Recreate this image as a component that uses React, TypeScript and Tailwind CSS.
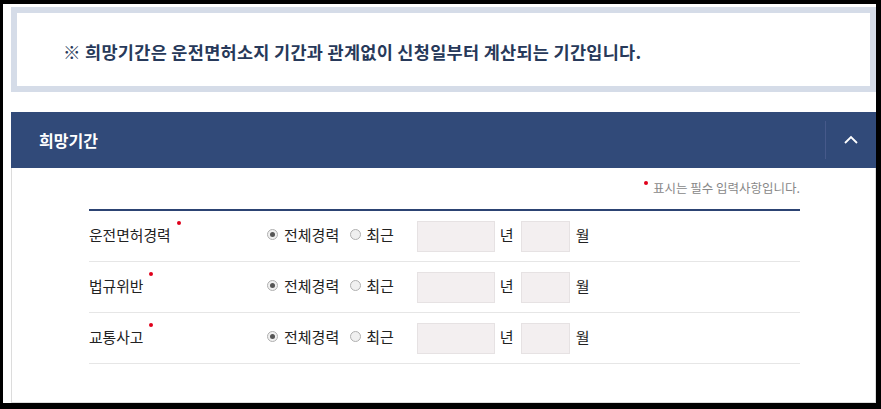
import React from "react";

const FONT = { fontFamily: '"Noto Sans CJK KR", "Noto Sans", sans-serif' };

function Radio({ checked }: { checked: boolean }) {
  return (
    <span className="w-[11px] h-[11px] rounded-full border border-[#b0b0b0] bg-[#f0f0f0] flex items-center justify-center shrink-0">
      {checked && <span className="w-[5px] h-[5px] rounded-full bg-[#555]" />}
    </span>
  );
}

function Row({ label }: { label: string }) {
  return (
    <div className="h-[51px] border-b border-[#e6e6e6] flex items-center text-[#222]">
      <div className="w-[178px] flex items-center -mt-[2px]">
        <span className="text-[14.8px] leading-none">{label}</span>
        <span className="w-[4px] h-[4px] rounded-full bg-[#e0001b] ml-[6px] -mt-[24px]" />
      </div>
      <div className="flex items-center gap-[6px] -mt-[3px]">
        <Radio checked />
        <span className="text-[15px] leading-none">전체경력</span>
      </div>
      <div className="flex items-center gap-[5px] ml-[11px] -mt-[3px]">
        <Radio checked={false} />
        <span className="text-[15px] leading-none">최근</span>
      </div>
      <div className="w-[78px] h-[31px] bg-[#f3eff0] border border-[#e6e2e3] ml-[23px]" />
      <span className="text-[15px] leading-none ml-[5px] -mt-[3px]">년</span>
      <div className="w-[49px] h-[31px] bg-[#f3eff0] border border-[#e6e2e3] ml-[7px]" />
      <span className="text-[15px] leading-none ml-[6px] -mt-[3px]">월</span>
    </div>
  );
}

export default function App() {
  return (
    <div
      className="w-[881px] h-[409px] bg-black pt-[4px] pl-[3px] pr-[5px] pb-[6px]"
      style={FONT}
    >
      <div className="bg-white h-full flex flex-col pl-[8px] pt-[3px]">
        <div className="h-[85px] border-[6px] border-[#d5dce8] flex items-center pl-[46px] pt-[5px]">
          <span className="text-[17.5px] font-bold text-[#27395a] tracking-[0.3px] whitespace-nowrap">
            ※ 희망기간은 운전면허소지 기간과 관계없이 신청일부터 계산되는 기간입니다.
          </span>
        </div>
        <div className="mt-[20px] h-[56px] bg-[#314a79] flex items-center justify-between">
          <span className="pl-[28px] text-[16px] font-bold text-white">희망기간</span>
          <div className="h-[38px] w-[51px] border-l border-[#46598a] flex items-center justify-center">
            <svg width="16" height="10" viewBox="0 0 16 10">
              <polyline
                points="2,8 8,2 14,8"
                fill="none"
                stroke="white"
                strokeWidth="1.8"
              />
            </svg>
          </div>
        </div>
        <div className="flex-1 border-l border-r border-b border-[#dcdcdc] pl-[77px] pr-[75px] pt-[11px]">
          <div className="h-[18px] flex items-center justify-end">
            <span className="w-[4px] h-[4px] rounded-full bg-[#e0001b] mr-[5px] -mt-[10px]" />
            <span className="text-[12.5px] text-[#888] leading-none">표시는 필수 입력사항입니다.</span>
          </div>
          <div className="mt-[12px] border-t-2 border-[#2c4373]">
            <Row label="운전면허경력" />
            <Row label="법규위반" />
            <Row label="교통사고" />
          </div>
        </div>
      </div>
    </div>
  );
}
